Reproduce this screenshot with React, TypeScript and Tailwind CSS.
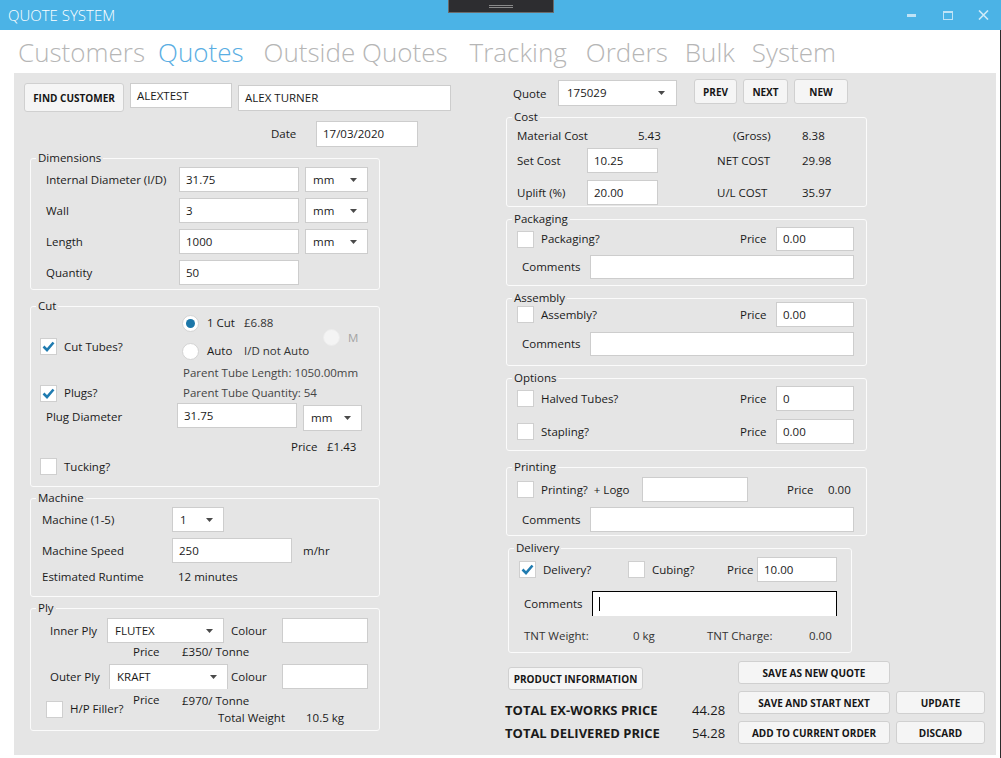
import React from "react";

type P = { className?: string; children?: React.ReactNode };

const Field = ({ className = "", value = "", focused = false }: { className?: string; value?: string; focused?: boolean }) => (
  <div
    className={`flex items-center bg-white border ${focused ? "border-black border-b-0" : "border-[#cdcdcd]"} px-[6px] text-[11.5px] leading-[16px] text-[#1a1a1a] ${className}`}
  >
    {focused && <span className="w-px h-[14px] bg-black" />}
    {value}
  </div>
);

const Combo = ({ className = "", value }: { className?: string; value: string }) => (
  <div className={`flex items-center justify-between bg-white border border-[#cdcdcd] pl-[7px] pr-[10px] text-[11.5px] leading-[16px] ${className}`}>
    <span>{value}</span>
    <svg width="7" height="4" viewBox="0 0 7 4">
      <path d="M0 0h7L3.5 4z" fill="#4a4a4a" />
    </svg>
  </div>
);

const Group = ({ title, className = "", children }: P & { title: string }) => (
  <fieldset className={`border border-[#fbfbfb] rounded-[3px] ${className}`}>
    <legend className="ml-[5px] px-[2px] text-[11.5px] leading-[16px] text-[#1a1a1a]">{title}</legend>
    {children}
  </fieldset>
);

const Btn = ({ className = "", children }: P) => (
  <button
    type="button"
    className={`flex items-center justify-center bg-[#f5f5f5] border border-[#d0d0d0] rounded-[3px] text-[10px] font-bold text-[#151515] ${className}`}
  >
    {children}
  </button>
);

const Check = ({ checked = false, label, gap = "ml-[7px]", className = "" }: { checked?: boolean; label?: string; gap?: string; className?: string }) => (
  <div className={`flex items-center ${className}`}>
    <div className="w-[17px] h-[17px] bg-white border border-[#cfcfcf] flex items-center justify-center shrink-0">
      {checked && (
        <svg width="13" height="11" viewBox="0 0 13 11">
          <path d="M1.5 5.5L5 9l6.5-7.5" fill="none" stroke="#1f7bb0" strokeWidth="2.6" />
        </svg>
      )}
    </div>
    {label && <span className={`${gap} leading-[16px]`}>{label}</span>}
  </div>
);

const Radio = ({ checked = false, disabled = false }: { checked?: boolean; disabled?: boolean }) => (
  <div
    className={`w-[17px] h-[17px] rounded-full flex items-center justify-center shrink-0 border ${disabled ? "bg-[#f4f4f4] border-[#ececec]" : "bg-white border-[#d3d3d3]"}`}
  >
    {checked && <div className="w-[9px] h-[9px] rounded-full bg-[#1b76a8]" />}
  </div>
);

export default function App() {
  return (
    <div className="w-[1001px] h-[758px] bg-white overflow-hidden font-['Segoe_UI','Open_Sans',sans-serif] text-[11.5px] leading-[16px] text-[#1a1a1a]">
      {/* title bar */}
      <div className="relative h-[30px] bg-[#4bb3e6] flex items-center pl-[8px]">
        <span className="text-white text-[15px] font-light">QUOTE SYSTEM</span>
        <div className="ml-auto flex items-center h-full pr-[1px]">
          <div className="w-[34px] flex justify-center">
            <div className="w-[9px] h-[3px] mr-[6px] bg-[#bfe3f6]" />
          </div>
          <div className="w-[35px] flex justify-center">
            <div className="w-[10px] h-[9px] mr-[2px] border border-[#bfe3f6] border-t-[2px]" />
          </div>
          <div className="w-[34px] flex justify-center">
            <svg width="11" height="10" viewBox="0 0 11 10">
              <path d="M1 0.5l9 9M10 0.5l-9 9" stroke="#cfeaf8" strokeWidth="1.6" />
            </svg>
          </div>
        </div>
        <div className="absolute left-[448px] top-0 w-[106px] h-[13px] bg-[#2d2d30] border border-t-0 border-[#6b6b6b] flex flex-col items-center justify-center gap-[1px]">
          <div className="w-[24px] h-px bg-[#8a8a8a]" />
          <div className="w-[24px] h-px bg-[#8a8a8a]" />
        </div>
      </div>

      <div className="h-[728px] border-r border-[#2b2b2b] flex flex-col">
        {/* nav */}
        <nav className="h-[43px] flex items-center pl-[18px] text-[26px] leading-[32px] font-light text-[#b6b6b6]">
          <span>Customers</span>
          <span className="ml-[13px] text-[#5aaee3]">Quotes</span>
          <span className="ml-[20px]">Outside Quotes</span>
          <span className="ml-[22px]">Tracking</span>
          <span className="ml-[19px]">Orders</span>
          <span className="ml-[17px]">Bulk</span>
          <span className="ml-[17px]">System</span>
        </nav>

        <div className="ml-[14px] mr-[4px] h-[682px] bg-[#e5e5e5] flex pl-[10px]">
          {/* left column */}
          <div className="w-[481px] flex flex-col pt-[10px]">
            <div className="flex items-start h-[29px]">
              <Btn className="w-[100px] h-[29px]">FIND CUSTOMER</Btn>
              <Field className="ml-[6px] w-[102px] h-[25px]" value="ALEXTEST" />
              <Field className="ml-[6px] mt-[2px] w-[213px] h-[26px]" value="ALEX TURNER" />
            </div>
            <div className="flex items-center mt-[9px] h-[26px] pl-[247px]">
              <span className="w-[45px]">Date</span>
              <Field className="w-[102px] h-[26px]" value="17/03/2020" />
            </div>

            <Group title="Dimensions" className="ml-[6px] mt-[3px] w-[350px] pb-[4px]">
              <div className="flex items-center pl-[15px] mt-[1px] h-[25px]">
                <span className="w-[133px]">Internal Diameter (I/D)</span>
                <Field className="w-[120px] h-[25px]" value="31.75" />
                <Combo className="ml-[6px] w-[63px] h-[25px]" value="mm" />
              </div>
              <div className="flex items-center pl-[15px] mt-[6px] h-[25px]">
                <span className="w-[133px]">Wall</span>
                <Field className="w-[120px] h-[25px]" value="3" />
                <Combo className="ml-[6px] w-[63px] h-[25px]" value="mm" />
              </div>
              <div className="flex items-center pl-[15px] mt-[6px] h-[25px]">
                <span className="w-[133px]">Length</span>
                <Field className="w-[120px] h-[25px]" value="1000" />
                <Combo className="ml-[6px] w-[63px] h-[25px]" value="mm" />
              </div>
              <div className="flex items-center pl-[15px] mt-[6px] h-[25px]">
                <span className="w-[133px]">Quantity</span>
                <Field className="w-[120px] h-[25px]" value="50" />
              </div>
            </Group>

            <Group title="Cut" className="ml-[6px] mt-[8px] w-[350px] pb-[11px]">
              <div className="flex h-[47px] pl-[9px]">
                <div className="w-[142px] pt-[24px]">
                  <Check checked label="Cut Tubes?" />
                </div>
                <div className="flex">
                  <div className="w-[141px] flex flex-col">
                    <div className="flex items-center mt-[1px] h-[16px]">
                      <Radio checked />
                      <span className="ml-[8px] w-[37px]">1 Cut</span>
                      <span className="text-[#333]">£6.88</span>
                    </div>
                    <div className="flex items-center mt-[12px] h-[16px]">
                      <Radio />
                      <span className="ml-[8px] w-[37px]">Auto</span>
                      <span className="text-[#333]">I/D not Auto</span>
                    </div>
                  </div>
                  <div className="flex items-center self-start mt-[15px]">
                    <Radio disabled />
                    <span className="ml-[8px] text-[#a3a3a3]">M</span>
                  </div>
                </div>
              </div>
              <div className="flex items-center h-[23px] pl-[152px] text-[#444]">Parent Tube Length: 1050.00mm</div>
              <div className="flex items-center h-[18px] pl-[9px]">
                <Check checked label="Plugs?" className="w-[143px]" />
                <span className="text-[#444]">Parent Tube Quantity: 54</span>
              </div>
              <div className="flex items-start h-[28px] mt-[1px] pl-[15px]">
                <span className="w-[131px] self-center">Plug Diameter</span>
                <Field className="w-[120px] h-[25px]" value="31.75" />
                <Combo className="ml-[6px] mt-[2px] w-[59px] h-[26px]" value="mm" />
              </div>
              <div className="flex items-center h-[16px] mt-[8px] pl-[260px]">
                <span className="w-[36px]">Price</span>
                <span>£1.43</span>
              </div>
              <div className="flex items-center h-[17px] mt-[3px] pl-[9px]">
                <Check label="Tucking?" />
              </div>
            </Group>

            <Group title="Machine" className="ml-[6px] mt-[3px] w-[350px] pb-[11px]">
              <div className="flex items-center h-[25px] mt-[1px] pl-[11px]">
                <span className="w-[130px]">Machine (1-5)</span>
                <Combo className="w-[52px] h-[25px]" value="1" />
              </div>
              <div className="flex items-center h-[25px] mt-[6px] pl-[11px]">
                <span className="w-[130px]">Machine Speed</span>
                <Field className="w-[120px] h-[25px]" value="250" />
                <span className="ml-[11px]">m/hr</span>
              </div>
              <div className="flex items-center h-[16px] mt-[6px] pl-[11px]">
                <span className="w-[136px]">Estimated Runtime</span>
                <span>12 minutes</span>
              </div>
            </Group>

            <Group title="Ply" className="ml-[6px] mt-[3px] w-[350px] pb-[4px]">
              <div className="flex items-center h-[25px] mt-[2px] pl-[19px]">
                <span className="w-[57px]">Inner Ply</span>
                <Combo className="w-[117px] h-[25px]" value="FLUTEX" />
                <span className="ml-[7px] w-[51px]">Colour</span>
                <Field className="w-[86px] h-[25px]" />
              </div>
              <div className="flex items-center h-[16px] mt-[1px] pl-[102px]">
                <span className="w-[49px]">Price</span>
                <span>£350/ Tonne</span>
              </div>
              <div className="flex items-center h-[25px] mt-[4px] pl-[19px]">
                <span className="w-[59px]">Outer Ply</span>
                <Combo className="w-[119px] h-[25px] border-b-0" value="KRAFT" />
                <span className="ml-[3px] w-[51px]">Colour</span>
                <Field className="w-[86px] h-[25px]" />
              </div>
              <div className="flex items-center mt-[3px] pl-[15px]">
                <Check label="H/P Filler?" className="w-[87px]" />
                <div className="flex flex-col">
                  <div className="flex items-center h-[16px]">
                    <span className="w-[49px]">Price</span>
                    <span className="mt-[2px]">£970/ Tonne</span>
                  </div>
                  <div className="flex items-center h-[16px] mt-[2px] pl-[85px]">
                    <span className="w-[88px]">Total Weight</span>
                    <span>10.5 kg</span>
                  </div>
                </div>
              </div>
            </Group>
          </div>

          {/* right column */}
          <div className="flex flex-col pt-[6px]">
            <div className="flex items-start h-[27px]">
              <span className="ml-[8px] mt-[7px] w-[45px]">Quote</span>
              <Combo className="mt-[1px] w-[119px] h-[26px] pl-[8px] pr-[11px]" value="175029" />
              <Btn className="ml-[17px] w-[43px] h-[25px]">PREV</Btn>
              <Btn className="ml-[6px] w-[45px] h-[25px]">NEXT</Btn>
              <Btn className="ml-[6px] w-[54px] h-[25px]">NEW</Btn>
            </div>

            <Group title="Cost" className="ml-[1px] mt-[3px] w-[361px] pb-[1px]">
              <div className="flex items-center h-[16px] mt-[3px] pl-[10px]">
                <span className="w-[121px]">Material Cost</span>
                <span className="w-[95px]">5.43</span>
                <span className="w-[69px]">(Gross)</span>
                <span>8.38</span>
              </div>
              <div className="flex items-center h-[25px] mt-[4px] pl-[10px]">
                <span className="w-[70px]">Set Cost</span>
                <Field className="w-[71px] h-[25px]" value="10.25" />
                <span className="ml-[59px] w-[85px]">NET COST</span>
                <span>29.98</span>
              </div>
              <div className="flex items-center h-[25px] mt-[7px] pl-[10px]">
                <span className="w-[70px]">Uplift (%)</span>
                <Field className="w-[71px] h-[25px]" value="20.00" />
                <span className="ml-[59px] w-[85px]">U/L COST</span>
                <span>35.97</span>
              </div>
            </Group>

            <Group title="Packaging" className="ml-[1px] mt-[4px] w-[361px] pb-[6px]">
              <div className="flex items-center h-[24px] pl-[10px]">
                <Check label="Packaging?" className="w-[223px]" />
                <span className="w-[36px]">Price</span>
                <Field className="w-[78px] h-[24px]" value="0.00" />
              </div>
              <div className="flex items-center h-[24px] mt-[4px] pl-[15px]">
                <span className="w-[68px]">Comments</span>
                <Field className="w-[264px] h-[24px]" />
              </div>
            </Group>

            <Group title="Assembly" className="ml-[1px] mt-[4px] w-[361px] pb-[9px]">
              <div className="flex items-center h-[25px] -mt-[4px] pl-[10px]">
                <Check label="Assembly?" className="w-[223px]" />
                <span className="w-[36px]">Price</span>
                <Field className="w-[78px] h-[25px]" value="0.00" />
              </div>
              <div className="flex items-center h-[24px] mt-[5px] pl-[15px]">
                <span className="w-[68px]">Comments</span>
                <Field className="w-[264px] h-[24px]" />
              </div>
            </Group>

            <Group title="Options" className="ml-[1px] mt-[4px] w-[361px] pb-[6px]">
              <div className="flex items-center h-[25px] pl-[10px]">
                <Check label="Halved Tubes?" className="w-[223px]" />
                <span className="w-[36px]">Price</span>
                <Field className="w-[78px] h-[25px]" value="0" />
              </div>
              <div className="flex items-center h-[25px] mt-[8px] pl-[10px]">
                <Check label="Stapling?" className="w-[223px]" />
                <span className="w-[36px]">Price</span>
                <Field className="w-[78px] h-[25px]" value="0.00" />
              </div>
            </Group>

            <Group title="Printing" className="ml-[1px] mt-[8px] w-[361px] pb-[3px]">
              <div className="flex items-center h-[25px] mt-[2px] pl-[10px]">
                <Check label="Printing?  + Logo" className="w-[125px] whitespace-pre" />
                <Field className="w-[106px] h-[25px]" />
                <span className="ml-[39px] w-[41px]">Price</span>
                <span>0.00</span>
              </div>
              <div className="flex items-center h-[25px] mt-[5px] pl-[15px]">
                <span className="w-[68px]">Comments</span>
                <Field className="w-[264px] h-[25px]" />
              </div>
            </Group>

            <Group title="Delivery" className="ml-[3px] mt-[4px] w-[344px] pb-[8px]">
              <div className="flex items-center h-[25px] mt-[1px] pl-[10px]">
                <Check checked label="Delivery?" className="w-[109px]" />
                <Check label="Cubing?" className="w-[99px]" />
                <span className="w-[30px]">Price</span>
                <Field className="w-[80px] h-[25px]" value="10.00" />
              </div>
              <div className="flex items-center h-[25px] mt-[9px] pl-[15px]">
                <span className="w-[68px]">Comments</span>
                <Field className="w-[245px] h-[25px] px-[4px]" focused />
              </div>
              <div className="flex items-center h-[16px] mt-[12px] pl-[15px] text-[#333]">
                <span className="w-[109px]">TNT Weight:</span>
                <span className="w-[74px]">0 kg</span>
                <span className="w-[102px]">TNT Charge:</span>
                <span>0.00</span>
              </div>
            </Group>

            <div className="flex">
              <div className="w-[233px] flex flex-col">
                <Btn className="ml-[3px] mt-[14px] w-[135px] h-[23px]">PRODUCT INFORMATION</Btn>
                <div className="flex items-center h-[18px] mt-[11px]">
                  <span className="w-[187px] text-[13px] font-bold">TOTAL EX-WORKS PRICE</span>
                  <span className="text-[13px]">44.28</span>
                </div>
                <div className="flex items-center h-[18px] mt-[5px]">
                  <span className="w-[187px] text-[13px] font-bold">TOTAL DELIVERED PRICE</span>
                  <span className="text-[13px]">54.28</span>
                </div>
              </div>
              <div className="flex flex-col mt-[8px] gap-[7px]">
                <Btn className="w-[152px] h-[23px]">SAVE AS NEW QUOTE</Btn>
                <div className="flex">
                  <Btn className="w-[152px] h-[23px]">SAVE AND START NEXT</Btn>
                  <Btn className="ml-[6px] w-[89px] h-[23px]">UPDATE</Btn>
                </div>
                <div className="flex">
                  <Btn className="w-[152px] h-[23px]">ADD TO CURRENT ORDER</Btn>
                  <Btn className="ml-[6px] w-[89px] h-[23px]">DISCARD</Btn>
                </div>
              </div>
            </div>
          </div>
        </div>
      </div>
    </div>
  );
}
